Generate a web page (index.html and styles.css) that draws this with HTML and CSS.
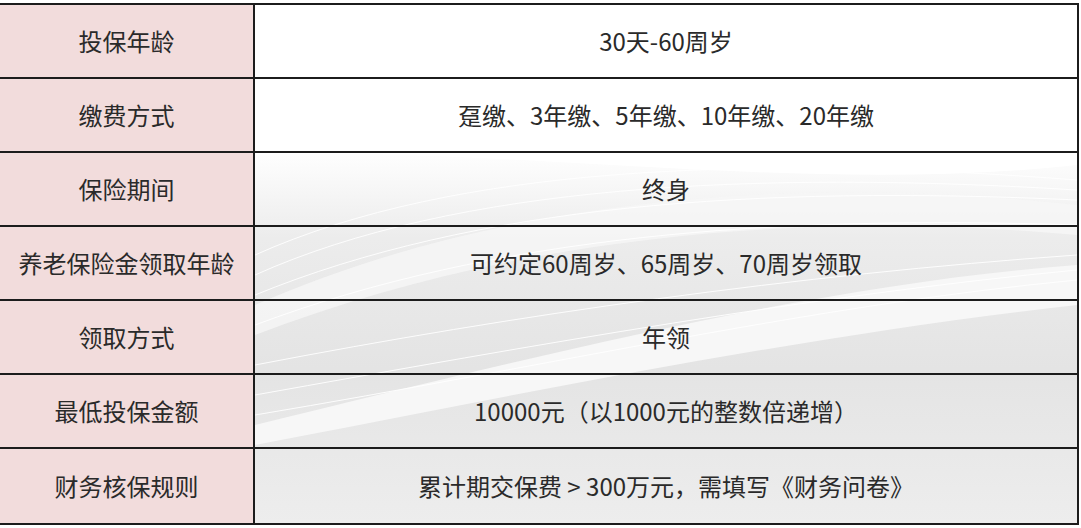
FILE: index.html
```html
<!DOCTYPE html>
<html lang="zh-CN">
<head>
<meta charset="utf-8">
<link rel="stylesheet" href="styles.css">
</head>
<body>
<div class="table">
  <div class="col-labels">
    <div class="cell label">投保年龄</div>
    <div class="cell label">缴费方式</div>
    <div class="cell label">保险期间</div>
    <div class="cell label">养老保险金领取年龄</div>
    <div class="cell label">领取方式</div>
    <div class="cell label">最低投保金额</div>
    <div class="cell label last">财务核保规则</div>
  </div>
  <div class="col-values">
    <div class="cell value">30天-60周岁</div>
    <div class="cell value">趸缴、3年缴、5年缴、10年缴、20年缴</div>
    <div class="cell value">终身</div>
    <div class="cell value">可约定60周岁、65周岁、70周岁领取</div>
    <div class="cell value">年领</div>
    <div class="cell value">10000元（以1000元的整数倍递增）</div>
    <div class="cell value last">累计期交保费 &gt; 300万元，需填写《财务问卷》</div>
  </div>
</div>
</body>
</html>
```

FILE: styles.css
```css
html, body {
  margin: 0;
  padding: 0;
  background: #ffffff;
}
body {
  width: 1081px;
  height: 528px;
  overflow: hidden;
  font-family: "Noto Sans CJK SC", "Microsoft YaHei", sans-serif;
  color: #2a2a2a;
}
.table {
  margin-top: 3px;
  width: 1079px;
  height: 522px;
  box-sizing: border-box;
  border-top: 2px solid #1c1c1c;
  border-bottom: 2px solid #1c1c1c;
  border-right: 2px solid #1c1c1c;
  display: grid;
  grid-template-columns: 255px 1fr;
}
.col-labels {
  display: grid;
  grid-template-rows: repeat(7, 1fr);
  background: #f2dcdc;
  border-right: 2px solid #1c1c1c;
}
.col-values {
  display: grid;
  grid-template-rows: repeat(7, 1fr);
  background-color: #f4f4f4;
  background-image:
    url("data:image/svg+xml;utf8,<svg xmlns='http://www.w3.org/2000/svg' width='822' height='518' viewBox='0 0 822 518'><defs><linearGradient id='g' x1='0' y1='0' x2='0' y2='1'><stop offset='0' stop-color='%23ffffff'/><stop offset='0.28' stop-color='%23ffffff'/><stop offset='0.45' stop-color='%23ececec'/><stop offset='0.7' stop-color='%23e4e4e4'/><stop offset='1' stop-color='%23ededed'/></linearGradient></defs><rect width='822' height='518' fill='url(%23g)'/><path d='M0 150 C250 140 550 190 822 160 L822 0 L0 0 Z' fill='%23ffffff'/><path d='M0 420 C250 360 550 280 822 260 L822 300 C550 330 260 390 0 440 Z' fill='%23f7f7f7'/><path d='M0 300 C250 190 550 170 822 200 L822 230 C550 205 260 230 0 330 Z' fill='%23f6f6f6' opacity='0.8'/><g fill='none' stroke='%23ffffff' stroke-width='1' opacity='0.9'><path d='M0 250 C200 160 500 150 822 175'/><path d='M0 270 C200 180 500 165 822 185'/><path d='M0 290 C220 200 500 180 822 195'/><path d='M0 320 C240 230 520 210 822 220'/><path d='M0 360 C260 310 540 270 822 250'/><path d='M0 390 C280 340 560 290 822 265'/><path d='M0 410 C300 360 560 300 822 275'/></g></svg>");
  background-size: 100% 100%;
}
.cell {
  display: flex;
  align-items: center;
  justify-content: center;
  font-size: 24px;
  line-height: 1;
  border-bottom: 2px solid #1c1c1c;
}
.cell.last {
  border-bottom: none;
}
```
